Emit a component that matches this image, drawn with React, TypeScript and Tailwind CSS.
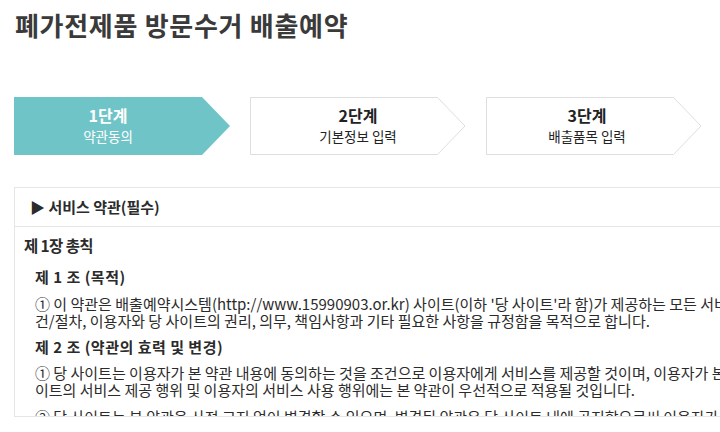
import React from "react"

type Step = { no: string; label: string; active?: boolean; shift: number }

const steps: Step[] = [
  { no: "1단계", label: "약관동의", active: true, shift: -14 },
  { no: "2단계", label: "기본정보 입력", shift: 0 },
  { no: "3단계", label: "배출품목 입력", shift: -7 },
]

function StepArrow({ step }: { step: Step }) {
  return (
    <div className="relative w-[216px] h-[58px] shrink-0">
      <svg className="absolute inset-0" width="216" height="58" viewBox="0 0 216 58">
        {step.active ? (
          <polygon points="0,0 188,0 216,29 188,58 0,58" fill="#6fc4c7" />
        ) : (
          <polygon
            points="0.5,0.5 187.5,0.5 215,29 187.5,57.5 0.5,57.5"
            fill="#ffffff"
            stroke="#dedede"
            strokeWidth="1"
          />
        )}
      </svg>
      <div
        className={`relative flex flex-col items-center pt-[7px] ${step.active ? "text-white" : "text-[#222]"}`}
        style={{ transform: `translateX(${step.shift}px)` }}
      >
        <span className="text-[16px] leading-[22px] font-bold">{step.no}</span>
        <span className="text-[13.5px] leading-[21px]">{step.label}</span>
      </div>
    </div>
  )
}

export default function App() {
  return (
    <div className="w-[720px] h-[432px] overflow-hidden bg-white font-['Noto_Sans_CJK_KR',sans-serif] text-[#2b2b2b]">
      {/* Title */}
      <h1 className="pt-[8px] pl-[15px] text-[26px] leading-[34px] font-bold tracking-[0.7px] text-[#3a3a3a]">
        폐가전제품 방문수거 배출예약
      </h1>

      {/* Steps */}
      <div className="flex gap-[20px] pl-[14px] mt-[55px]">
        {steps.map((s) => (
          <StepArrow key={s.no} step={s} />
        ))}
      </div>

      {/* Terms box */}
      <div className="ml-[14px] mt-[32px] w-[900px] h-[230px] border border-[#e6e6e6] overflow-hidden">
        <div className="h-[39px] flex items-center pl-[15px] border-b border-[#e6e6e6] text-[15px] font-bold">
          ▶ 서비스 약관(필수)
        </div>
        <div className="pl-[9px] pt-[6px]">
          <h2 className="text-[15.5px] leading-[24px] font-bold tracking-[-0.6px]">제 1장 총칙</h2>
          <div className="pl-[11px]">
            <h3 className="mt-[9px] text-[15px] leading-[22px] font-bold tracking-[0.5px]">제 1 조 (목적)</h3>
            <p className="mt-[8px] text-[15px] leading-[16.5px] whitespace-nowrap">
              ① 이 약관은 배출예약시스템(http://www.15990903.or.kr) 사이트(이하 '당 사이트'라 함)가 제공하는 모든 서비스의 이용조
              <br />
              건/절차, 이용자와 당 사이트의 권리, 의무, 책임사항과 기타 필요한 사항을 규정함을 목적으로 합니다.
            </p>
            <h3 className="mt-[7px] text-[15px] leading-[22px] font-bold tracking-[0.5px]">제 2 조 (약관의 효력 및 변경)</h3>
            <p className="mt-[6px] text-[15px] leading-[17px] whitespace-nowrap">
              ① 당 사이트는 이용자가 본 약관 내용에 동의하는 것을 조건으로 이용자에게 서비스를 제공할 것이며, 이용자가 본 약관 내용에 동의하는 경우, 당 사
              <br />
              이트의 서비스 제공 행위 및 이용자의 서비스 사용 행위에는 본 약관이 우선적으로 적용될 것입니다.
            </p>
            <p className="mt-[10px] text-[15px] leading-[17px] whitespace-nowrap">
              ② 당 사이트는 본 약관을 사전 고지 없이 변경할 수 있으며, 변경된 약관은 당 사이트 내에 공지함으로써 이용자가 직접 확인하도록 할 것입니다.
            </p>
          </div>
        </div>
      </div>
    </div>
  )
}
